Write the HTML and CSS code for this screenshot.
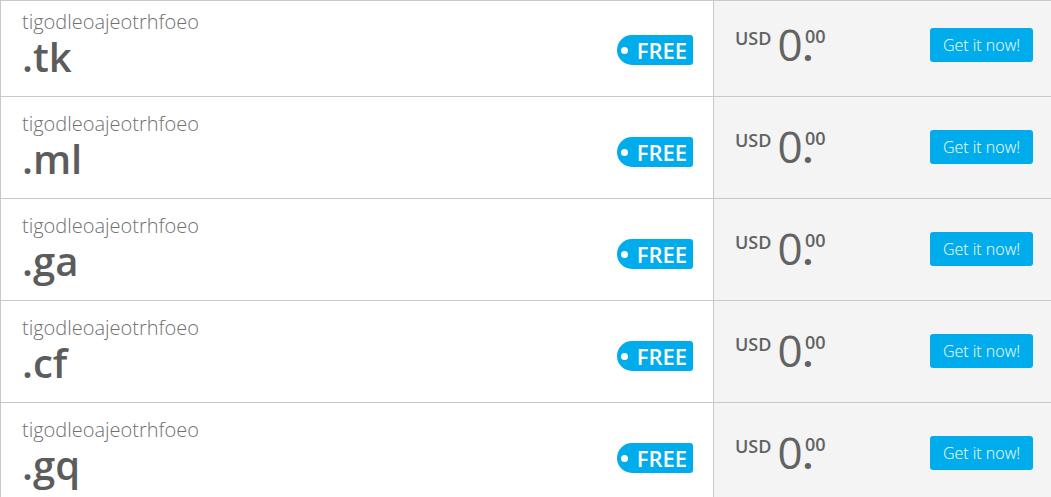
FILE: index.html
```html
<!DOCTYPE html>
<html lang="en">
<head>
    <meta charset="UTF-8">
    <meta name="viewport" content="width=device-width, initial-scale=1.0">
    <title>Domain availability</title>
    <link rel="stylesheet" href="styles.css">
</head>
<body>
    <div class="results">
        <div class="rows">
            <div class="row">
                <div class="domain-cell">
                    <div class="domain">
                        <div class="name">tigodleoajeotrhfoeo</div>
                        <div class="tld">.tk</div>
                    </div>
                    <span class="badge"><span class="badge-dot"></span>FREE</span>
                </div>
                <div class="price-cell">
                    <div class="price"><span class="currency">USD</span><span class="amount">0</span><span class="dot">.</span><span class="cents">00</span></div>
                    <button class="buy">Get it now!</button>
                </div>
            </div>

            <div class="row">
                <div class="domain-cell">
                    <div class="domain">
                        <div class="name">tigodleoajeotrhfoeo</div>
                        <div class="tld">.ml</div>
                    </div>
                    <span class="badge"><span class="badge-dot"></span>FREE</span>
                </div>
                <div class="price-cell">
                    <div class="price"><span class="currency">USD</span><span class="amount">0</span><span class="dot">.</span><span class="cents">00</span></div>
                    <button class="buy">Get it now!</button>
                </div>
            </div>

            <div class="row">
                <div class="domain-cell">
                    <div class="domain">
                        <div class="name">tigodleoajeotrhfoeo</div>
                        <div class="tld">.ga</div>
                    </div>
                    <span class="badge"><span class="badge-dot"></span>FREE</span>
                </div>
                <div class="price-cell">
                    <div class="price"><span class="currency">USD</span><span class="amount">0</span><span class="dot">.</span><span class="cents">00</span></div>
                    <button class="buy">Get it now!</button>
                </div>
            </div>

            <div class="row">
                <div class="domain-cell">
                    <div class="domain">
                        <div class="name">tigodleoajeotrhfoeo</div>
                        <div class="tld">.cf</div>
                    </div>
                    <span class="badge"><span class="badge-dot"></span>FREE</span>
                </div>
                <div class="price-cell">
                    <div class="price"><span class="currency">USD</span><span class="amount">0</span><span class="dot">.</span><span class="cents">00</span></div>
                    <button class="buy">Get it now!</button>
                </div>
            </div>

            <div class="row">
                <div class="domain-cell">
                    <div class="domain">
                        <div class="name">tigodleoajeotrhfoeo</div>
                        <div class="tld">.gq</div>
                    </div>
                    <span class="badge"><span class="badge-dot"></span>FREE</span>
                </div>
                <div class="price-cell">
                    <div class="price"><span class="currency">USD</span><span class="amount">0</span><span class="dot">.</span><span class="cents">00</span></div>
                    <button class="buy">Get it now!</button>
                </div>
            </div>
        </div>
    </div>
</body>
</html>
```

FILE: styles.css
```css
* {
    box-sizing: border-box;
    margin: 0;
    padding: 0;
    font-family: 'Open Sans', 'Liberation Sans', sans-serif;
}

body {
    background-color: white;
    height: 497px;
    overflow: hidden;
}

/* list is scrolled a little, so the first row is cut at the top */
.results {
    border-top: 1px solid #c8c8c8;
    overflow: hidden;
}

.rows {
    margin-top: -6px;
}

.row {
    display: flex;
    height: 102px;
    border-bottom: 1px solid #c8c8c8;
}

.domain-cell {
    width: 714px;
    display: flex;
    justify-content: space-between;
    align-items: flex-start;
    padding: 14px 20px 0 21px;
    border-left: 1px solid #c8c8c8;
    border-right: 1px solid #c8c8c8;
    background-color: white;
}

.name {
    font-size: 20px;
    line-height: 26px;
    font-weight: 300;
    color: #707070;
}

.tld {
    font-size: 40px;
    line-height: 44px;
    font-weight: 600;
    color: #5c5c5c;
}

.badge {
    display: flex;
    align-items: center;
    height: 30px;
    margin-top: 26px;
    padding: 0 6px 0 4px;
    border-radius: 15px 3px 3px 15px;
    background-color: #00acec;
    color: white;
    font-size: 22px;
    font-weight: 600;
}

.badge-dot {
    width: 7px;
    height: 7px;
    margin-right: 9px;
    border-radius: 50%;
    background-color: white;
}

.price-cell {
    flex: 1;
    display: flex;
    justify-content: space-between;
    align-items: flex-start;
    padding: 0 18px 0 21px;
    background-color: #f4f4f4;
}

.price {
    padding-top: 27px;
    font-size: 44px;
    line-height: 44px;
    color: #626262;
    white-space: nowrap;
}

.currency {
    margin-right: 6px;
    font-size: 18px;
    line-height: 0;
    font-weight: 600;
    vertical-align: 16px;
}

.amount {
    font-weight: 400;
}

.dot {
    font-size: 36px;
    line-height: 0;
    font-weight: 700;
}

.cents {
    margin-left: -8px;
    font-size: 18px;
    line-height: 0;
    font-weight: 600;
    vertical-align: 18px;
}

.buy {
    width: 103px;
    height: 34px;
    margin-top: 33px;
    border: none;
    border-radius: 3px;
    background-color: #00acec;
    color: white;
    font-size: 16px;
    font-weight: 300;
    cursor: pointer;
}

.buy:hover {
    background-color: #0098d2;
}
```
